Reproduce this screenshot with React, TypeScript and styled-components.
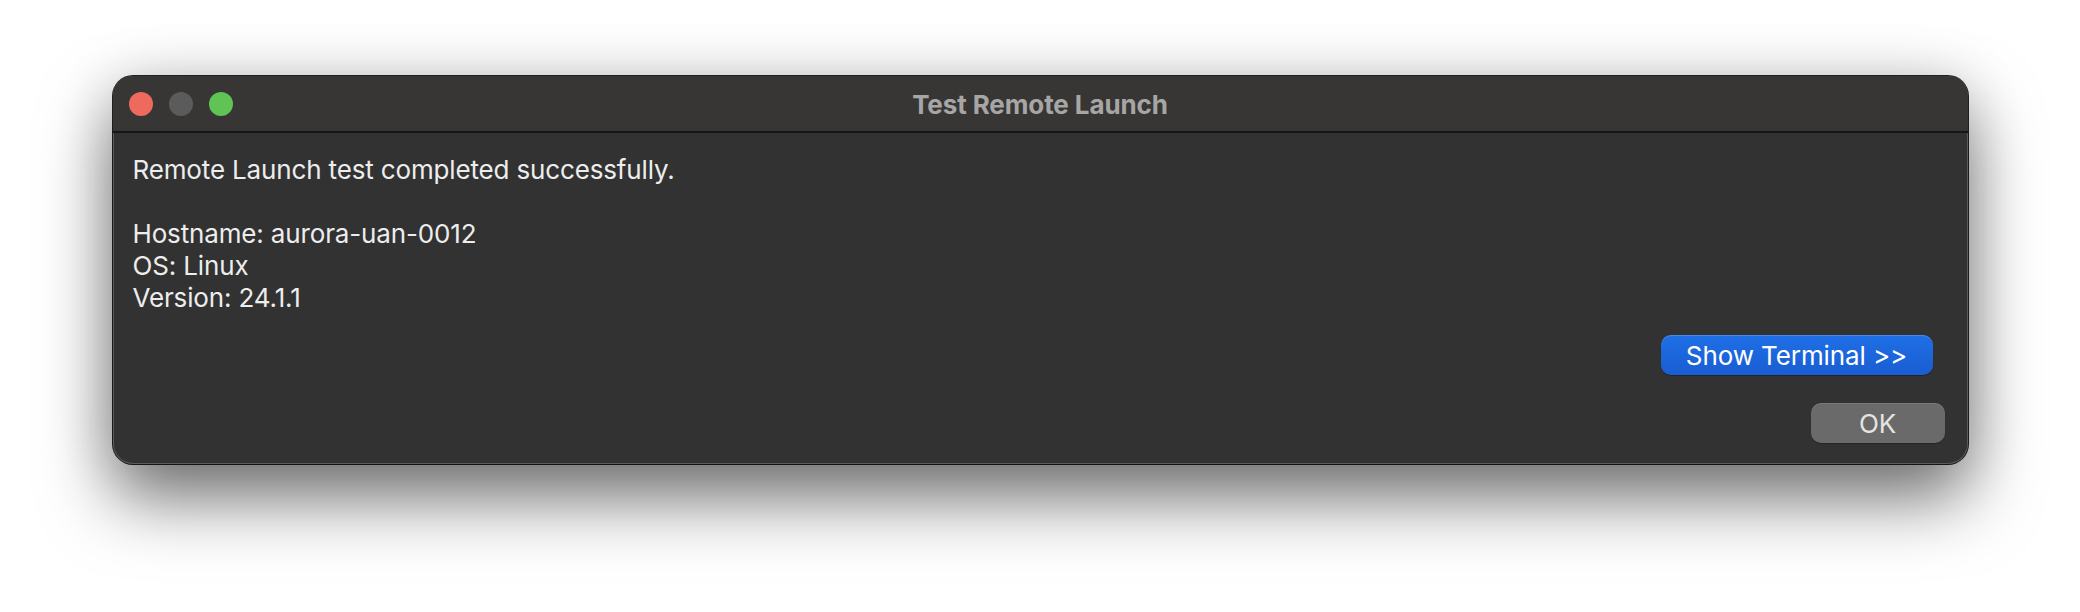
import React from "react";
import styled, { createGlobalStyle } from "styled-components";

const GlobalStyle = createGlobalStyle`
  html, body {
    margin: 0;
    padding: 0;
    background: #ffffff;
  }
  body {
    font-family: Inter, "Noto Sans", "Liberation Sans", sans-serif;
    -webkit-font-smoothing: antialiased;
  }
`;

const Page = styled.div`
  width: 2080px;
  height: 612px;
  display: flex;
  justify-content: center;
  align-items: flex-start;
  padding-top: 76px;
  box-sizing: border-box;
  overflow: hidden;
`;

const Window = styled.div`
  width: 1855px;
  height: 388px;
  box-sizing: border-box;
  border-radius: 20px;
  background: #323232;
  display: flex;
  flex-direction: column;
  overflow: hidden;
  box-shadow:
    0 0 0 1px rgba(0, 0, 0, 0.85),
    inset 0 0 0 1px rgba(255, 255, 255, 0.2),
    0 34px 70px rgba(0, 0, 0, 0.55),
    0 0 60px rgba(0, 0, 0, 0.12);
`;

const TitleBar = styled.div`
  position: relative;
  height: 57px;
  flex: none;
  background: #383634;
  border-bottom: 2px solid #161616;
  display: flex;
  align-items: center;
  justify-content: center;
  box-sizing: border-box;
  padding-top: 1px;
`;

const Lights = styled.div`
  position: absolute;
  left: 16px;
  top: 16px;
  display: flex;
  gap: 16px;
`;

const Light = styled.span<{ $color: string }>`
  width: 24px;
  height: 24px;
  border-radius: 50%;
  background: ${(p) => p.$color};
`;

const Title = styled.div`
  font-size: 26px;
  font-weight: 700;
  color: #a6a6a6;
  letter-spacing: -0.1px;
`;

const Body = styled.div`
  flex: 1;
  display: flex;
  flex-direction: column;
  padding: 21px 23px 21px 20px;
`;

const Message = styled.div`
  font-size: 26px;
  line-height: 32px;
  color: #ededed;
  white-space: pre-line;
  letter-spacing: -0.15px;
`;

const Actions = styled.div`
  margin-top: auto;
  display: flex;
  flex-direction: column;
  align-items: flex-end;
  gap: 28px;
`;

const Button = styled.button<{ $primary?: boolean; $width: number; $inset?: number }>`
  width: ${(p) => p.$width}px;
  height: 40px;
  margin-right: ${(p) => p.$inset ?? 0}px;
  border: none;
  border-radius: 10px;
  font-family: inherit;
  font-size: 26px;
  padding: 0;
  letter-spacing: -0.1px;
  color: ${(p) => (p.$primary ? "#ffffff" : "#e4e4e4")};
  background: ${(p) =>
    p.$primary
      ? "linear-gradient(#1f6fe6, #195dd2)"
      : "#6a6a6a"};
  box-shadow: ${(p) =>
    p.$primary
      ? "inset 0 1px 0 rgba(255,255,255,0.18), 0 1px 1px rgba(0,0,0,0.3)"
      : "inset 0 1px 0 rgba(255,255,255,0.1), 0 1px 1px rgba(0,0,0,0.25)"};
  display: flex;
  align-items: center;
  justify-content: center;
`;

export default function App() {
  return (
    <>
      <GlobalStyle />
      <Page>
        <Window>
          <TitleBar>
            <Lights>
              <Light $color="#ee6a5f" />
              <Light $color="#5b5b5b" />
              <Light $color="#5fc453" />
            </Lights>
            <Title>Test Remote Launch</Title>
          </TitleBar>
          <Body>
            <Message>
              {"Remote Launch test completed successfully.\n\nHostname: aurora-uan-0012\nOS: Linux\nVersion: 24.1.1"}
            </Message>
            <Actions>
              <Button $primary $width={272} $inset={12}>
                Show Terminal &gt;&gt;
              </Button>
              <Button $width={134}>OK</Button>
            </Actions>
          </Body>
        </Window>
      </Page>
    </>
  );
}
